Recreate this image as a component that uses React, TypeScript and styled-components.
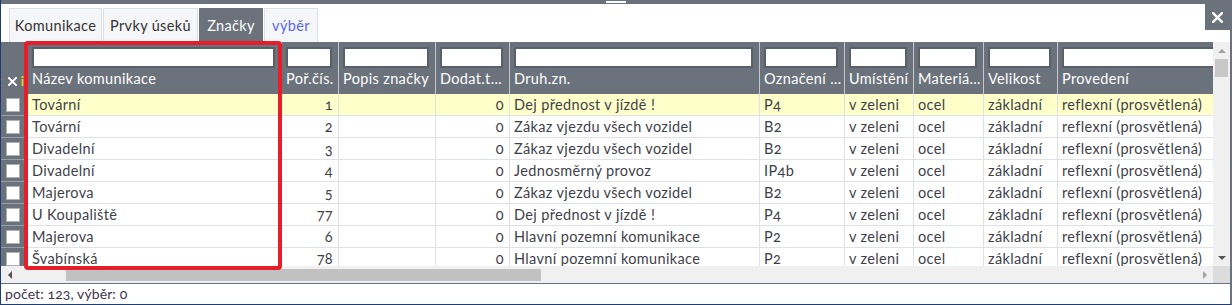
import React from 'react';
import styled, { createGlobalStyle } from 'styled-components';

const GRAY = '#6b727c';
const NAVY = '#1f3c6e';
const LINE = '#dee1e6';
const TEXT = '#3f3f4a';

const COLS = [27, 254, 57, 97, 74, 250, 85, 69, 70, 74, 230];
const TEMPLATE = COLS.map((w) => `${w}px`).join(' ');

const GlobalStyle = createGlobalStyle`
  html, body { margin: 0; padding: 0; background: #fff; }
  body {
    font-family: Lato, "Open Sans", sans-serif;
    font-size: 14.5px;
    letter-spacing: 0.35px;
    color: ${TEXT};
    font-variant-numeric: oldstyle-nums;
  }
  * { box-sizing: border-box; }
`;

const Root = styled.div`
  position: relative;
  width: 1232px;
  height: 305px;
  display: flex;
  flex-direction: column;
  background: #fff;
  border-left: 1px solid ${NAVY};
  border-bottom: 1px solid ${NAVY};
  border-right: 2px solid ${GRAY};
  overflow: hidden;
`;

const TopBar = styled.div`
  flex: none;
  height: 4px;
  background: ${GRAY};
  display: flex;
  justify-content: center;
`;

const Grip = styled.div`
  width: 20px;
  height: 2px;
  margin-top: 1px;
  background: #fff;
`;

const TabBar = styled.div`
  flex: none;
  height: 38px;
  display: flex;
  align-items: flex-start;
  gap: 1px;
  padding: 4px 0 0 8px;
`;

const Tab = styled.div<{ $w: number; $variant?: 'active' | 'link' }>`
  width: ${(p) => p.$w}px;
  height: 34px;
  display: flex;
  align-items: center;
  justify-content: center;
  white-space: nowrap;
  border: 1px solid ${(p) => (p.$variant === 'active' ? GRAY : '#dcdfe3')};
  border-bottom: none;
  background: ${(p) => (p.$variant === 'active' ? GRAY : '#f5f6f8')};
  color: ${(p) => (p.$variant === 'active' ? '#fff' : p.$variant === 'link' ? '#5a67f0' : '#333')};
`;

const CloseButton = styled.div`
  margin-left: auto;
  margin-top: -4px;
  width: 25px;
  height: 26px;
  background: ${GRAY};
  display: flex;
  align-items: center;
  justify-content: center;
`;

const GridArea = styled.div`
  flex: none;
  height: 241px;
  display: grid;
  grid-template-columns: 1fr 17px;
  grid-template-rows: 1fr 17px;
`;

const Viewport = styled.div`
  overflow: hidden;
  min-width: 0;
`;

const HeaderRow = styled.div`
  display: grid;
  grid-template-columns: ${TEMPLATE};
  height: 52px;
  background: ${GRAY};
`;

const HeaderCell = styled.div`
  display: flex;
  flex-direction: column;
  padding: 5px 6px 0 4px;
  border-right: 1px solid #c4c8cd;
  overflow: hidden;
`;

const CornerCell = styled.div`
  display: flex;
  align-items: center;
  justify-content: flex-end;
  gap: 3px;
  padding: 26px 4px 0 0;
  overflow: hidden;
  white-space: nowrap;
  line-height: 20px;
  letter-spacing: 0;
  & > * { flex: none; }
`;

const DimMark = styled.span`
  color: rgba(255, 255, 255, 0.55);
  font-size: 14px;
  margin-right: 4px;
`;

const InfoMark = styled.span`
  color: #e6c619;
  font-weight: 700;
  font-size: 14px;
`;

const FilterInput = styled.input`
  flex: none;
  width: 100%;
  height: 21px;
  margin: 0;
  padding: 0 3px;
  border: 2px solid #596069;
  background: #fff;
  outline: none;
  font: inherit;
`;

const HeaderTitle = styled.div`
  margin: 1px -5px 0 0;
  color: #fff;
  line-height: 20px;
  white-space: nowrap;
  overflow: hidden;
  text-overflow: ellipsis;
`;

const Row = styled.div<{ $hl?: boolean }>`
  display: grid;
  grid-template-columns: ${TEMPLATE};
  height: 22px;
  background: ${(p) => (p.$hl ? '#ffffca' : '#fff')};
`;

const CheckCell = styled.div`
  background: ${GRAY};
  border-bottom: 1px solid #9aa0a7;
  display: flex;
  align-items: center;
  padding-left: 5px;
`;

const CheckBox = styled.div`
  width: 14px;
  height: 14px;
  background: #fff;
  border: 1px solid #aab0b6;
`;

const Cell = styled.div<{ $right?: boolean }>`
  border-right: 1px solid ${LINE};
  border-bottom: 1px solid ${LINE};
  padding: 0 ${(p) => (p.$right ? '5px' : '4px')} 0 4px;
  line-height: 21px;
  white-space: nowrap;
  overflow: hidden;
  text-overflow: ellipsis;
  text-align: ${(p) => (p.$right ? 'right' : 'left')};
`;

const VScroll = styled.div`
  background: #f0f0f0;
  display: flex;
  flex-direction: column;
  align-items: center;
`;

const HScroll = styled.div`
  background: #f0f0f0;
  display: flex;
  align-items: center;
  min-width: 0;
`;

const ArrowBox = styled.div`
  flex: none;
  width: 17px;
  height: 17px;
  display: flex;
  align-items: center;
  justify-content: center;
`;

const Spacer = styled.div`
  flex: 1;
`;

const Triangle = styled.div<{ $dir: 'up' | 'down' | 'left' | 'right'; $dark?: boolean }>`
  width: 0;
  height: 0;
  ${(p) => {
    const c = p.$dark ? '#555' : '#a3a3a3';
    switch (p.$dir) {
      case 'up':
        return `border-left: 4px solid transparent; border-right: 4px solid transparent; border-bottom: 4px solid ${c};`;
      case 'down':
        return `border-left: 4px solid transparent; border-right: 4px solid transparent; border-top: 4px solid ${c};`;
      case 'left':
        return `border-top: 4px solid transparent; border-bottom: 4px solid transparent; border-right: 4px solid ${c};`;
      default:
        return `border-top: 4px solid transparent; border-bottom: 4px solid transparent; border-left: 4px solid ${c};`;
    }
  }}
`;

const VThumb = styled.div`
  flex: none;
  width: 13px;
  height: 18px;
  background: #c8c8c8;
`;

const HThumb = styled.div`
  flex: none;
  margin-left: 48px;
  width: 475px;
  height: 12px;
  background: #c1c1c1;
`;

const Corner = styled.div`
  background: #dcdcdc;
`;

const StatusBar = styled.div`
  flex: none;
  height: 21px;
  border-top: 1px solid ${GRAY};
  padding-left: 4px;
  line-height: 20px;
  font-size: 14px;
  letter-spacing: 0.1px;
  color: #3d3550;
`;

const Highlight = styled.div`
  position: absolute;
  left: 23px;
  top: 41px;
  width: 258px;
  height: 229px;
  border: 4px solid #e61e2a;
  border-radius: 4px;
  pointer-events: none;
`;

type Rec = {
  name: string;
  por: string;
  popis: string;
  dodat: string;
  druh: string;
  ozn: string;
  umist: string;
  mat: string;
  vel: string;
  prov: string;
};

const mk = (name: string, por: string, druh: string, ozn: string): Rec => ({
  name,
  por,
  popis: '',
  dodat: '0',
  druh,
  ozn,
  umist: 'v zeleni',
  mat: 'ocel',
  vel: 'základní',
  prov: 'reflexní (prosvětlená)',
});

const ROWS: Rec[] = [
  mk('Tovární', '1', 'Dej přednost v jízdě !', 'P4'),
  mk('Tovární', '2', 'Zákaz vjezdu všech vozidel', 'B2'),
  mk('Divadelní', '3', 'Zákaz vjezdu všech vozidel', 'B2'),
  mk('Divadelní', '4', 'Jednosměrný provoz', 'IP4b'),
  mk('Majerova', '5', 'Zákaz vjezdu všech vozidel', 'B2'),
  mk('U Koupaliště', '77', 'Dej přednost v jízdě !', 'P4'),
  mk('Majerova', '6', 'Hlavní pozemní komunikace', 'P2'),
  mk('Švabínská', '78', 'Hlavní pozemní komunikace', 'P2'),
];

const HEADERS = [
  'Název komunikace',
  'Poř.čís.',
  'Popis značky',
  'Dodat.tabulka',
  'Druh.zn.',
  'Označení značky',
  'Umístění',
  'Materiál sloupku',
  'Velikost',
  'Provedení',
];

const XIcon = ({ size, stroke }: { size: number; stroke: number }) => (
  <svg width={size} height={size} viewBox="0 0 10 10">
    <path d="M1 1 L9 9 M9 1 L1 9" stroke="#fff" strokeWidth={stroke} strokeLinecap="square" fill="none" />
  </svg>
);

export default function App() {
  return (
    <>
      <GlobalStyle />
      <Root>
        <TopBar>
          <Grip />
        </TopBar>
        <TabBar>
          <Tab $w={93}>Komunikace</Tab>
          <Tab $w={95}>Prvky úseků</Tab>
          <Tab $w={64} $variant="active">Značky</Tab>
          <Tab $w={54} $variant="link">výběr</Tab>
          <CloseButton>
            <XIcon size={11} stroke={2.2} />
          </CloseButton>
        </TabBar>
        <GridArea>
          <Viewport>
            <HeaderRow>
              <CornerCell>
                <DimMark>t</DimMark>
                <XIcon size={9} stroke={2.2} />
                <InfoMark>i</InfoMark>
              </CornerCell>
              {HEADERS.map((h) => (
                <HeaderCell key={h}>
                  <FilterInput readOnly tabIndex={-1} />
                  <HeaderTitle>{h}</HeaderTitle>
                </HeaderCell>
              ))}
            </HeaderRow>
            {ROWS.map((r, i) => (
              <Row key={i} $hl={i === 0}>
                <CheckCell>
                  <CheckBox />
                </CheckCell>
                <Cell>{r.name}</Cell>
                <Cell $right>{r.por}</Cell>
                <Cell>{r.popis}</Cell>
                <Cell $right>{r.dodat}</Cell>
                <Cell>{r.druh}</Cell>
                <Cell>{r.ozn}</Cell>
                <Cell>{r.umist}</Cell>
                <Cell>{r.mat}</Cell>
                <Cell>{r.vel}</Cell>
                <Cell>{r.prov}</Cell>
              </Row>
            ))}
          </Viewport>
          <VScroll>
            <ArrowBox>
              <Triangle $dir="up" />
            </ArrowBox>
            <VThumb />
            <Spacer />
            <ArrowBox>
              <Triangle $dir="down" $dark />
            </ArrowBox>
          </VScroll>
          <HScroll>
            <ArrowBox>
              <Triangle $dir="left" $dark />
            </ArrowBox>
            <HThumb />
            <Spacer />
            <ArrowBox>
              <Triangle $dir="right" />
            </ArrowBox>
          </HScroll>
          <Corner />
        </GridArea>
        <StatusBar>počet: 123, výběr: 0</StatusBar>
        <Highlight />
      </Root>
    </>
  );
}
